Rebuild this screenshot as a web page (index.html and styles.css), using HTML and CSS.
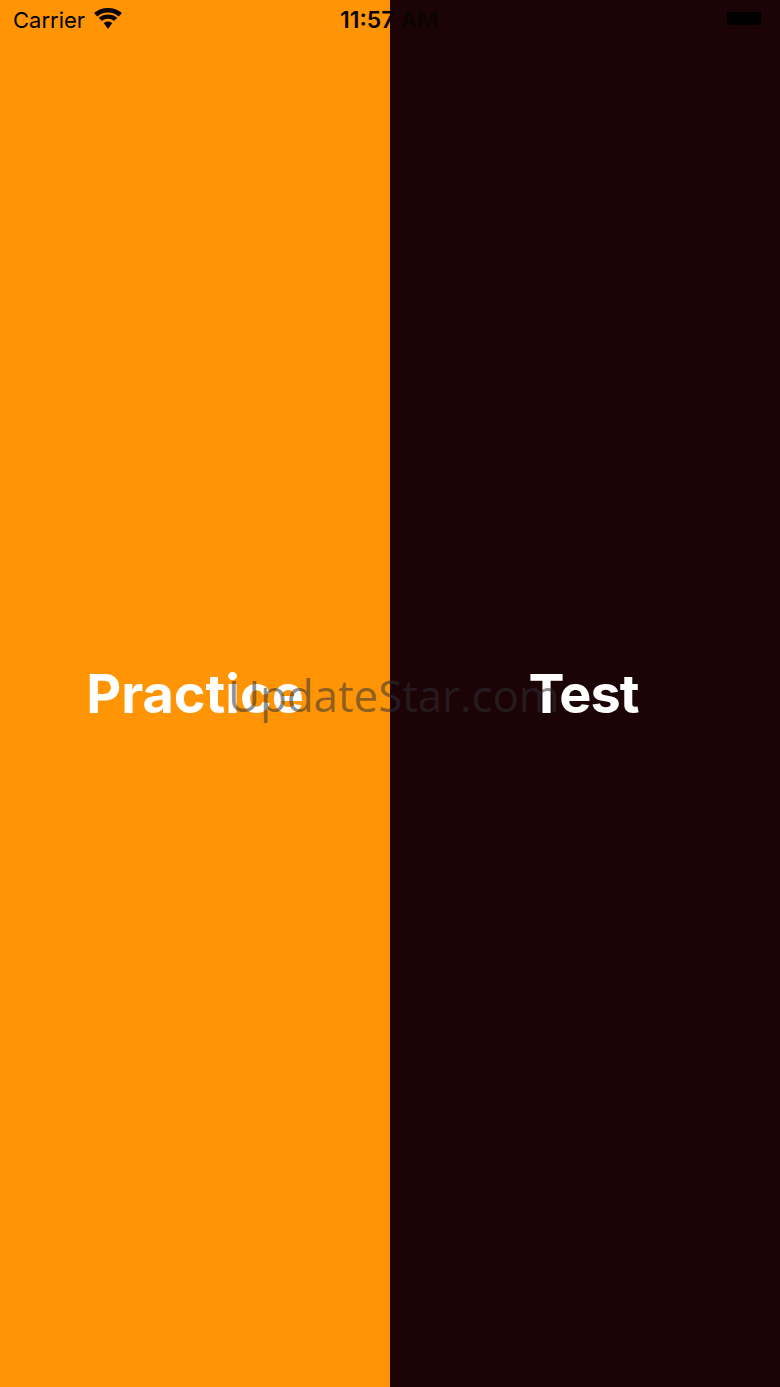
FILE: index.html
```
<!DOCTYPE html>
<html lang="en">
<head>
<meta charset="utf-8">
<title>Practice or Test</title>
<link rel="stylesheet" href="styles.css">
</head>
<body>
<main class="screen">
  <section class="pane pane-practice"><span class="pane-label">Practice</span></section>
  <section class="pane pane-test"><span class="pane-label pane-label-tight">Test</span></section>
  <header class="status-bar">
    <div class="status-left">
      <span class="carrier">Carrier</span>
      <svg class="wifi" viewBox="1.600 0 26.800 22" preserveAspectRatio="none" aria-hidden="true">
        <path d="M15 4.800c3.900 0 7.500 1.500 10.200 4l3.200-3.500C24.900 2 20.200 0 15 0S5.100 2 1.600 5.300l3.200 3.500c2.700-2.500 6.300-4 10.200-4z"/>
        <path d="M15 11.300c2.200 0 4.200.8 5.700 2.200l3.200-3.400C21.600 8 18.500 6.700 15 6.700S8.400 8 6.100 10.100l3.200 3.400c1.500-1.400 3.500-2.200 5.700-2.200z"/>
        <path d="M15 14.200c-1.600 0-3 .6-4.100 1.600L15 22l4.100-6.200c-1.100-1-2.500-1.600-4.100-1.600z"/>
      </svg>
    </div>
    <time class="clock">11:57 AM</time>
    <div class="battery"></div>
  </header>
  <div class="watermark">UpdateStar.com</div>
</main>
</body>
</html>
```
FILE: styles.css
```
* { box-sizing: border-box; }
html, body { margin: 0; padding: 0; }
body { width: 780px; height: 1387px; overflow: hidden; font-family: Inter, "Liberation Sans", sans-serif; }
.screen { position: relative; display: flex; width: 780px; height: 1387px; }
.pane { flex: 1 1 50%; display: flex; align-items: center; justify-content: center; }
.pane-practice { background: #ff9505; }
.pane-test { background: #1c0305; }
.pane-label { color: #fff; font-size: 54px; font-weight: 700; line-height: 66px; }
.pane-label-tight { letter-spacing: -1px; padding-right: 3px; }
.status-bar { position: absolute; top: 0; left: 0; width: 780px; height: 40px; display: flex; align-items: center; justify-content: space-between; padding: 0 19px 0 13px; color: #000; }
.status-left { display: flex; align-items: center; gap: 9px; }
.carrier { font-size: 22px; font-weight: 400; line-height: 40px; }
.wifi { width: 28px; height: 21px; fill: #0a0502; margin-bottom: 3px; }
.clock { position: absolute; left: 340px; top: 0; font-size: 23px; font-weight: 600; line-height: 40px; color: #0a0502; }
.battery { width: 34px; height: 13px; background: #000; margin-bottom: 3px; filter: blur(.6px); }
.watermark { position: absolute; left: 228px; top: 665px; font-family: "Open Sans", sans-serif; font-size: 44px; font-weight: 400; line-height: 60px; letter-spacing: -0.1px; color: rgba(45, 48, 55, .55); white-space: nowrap; }
```
